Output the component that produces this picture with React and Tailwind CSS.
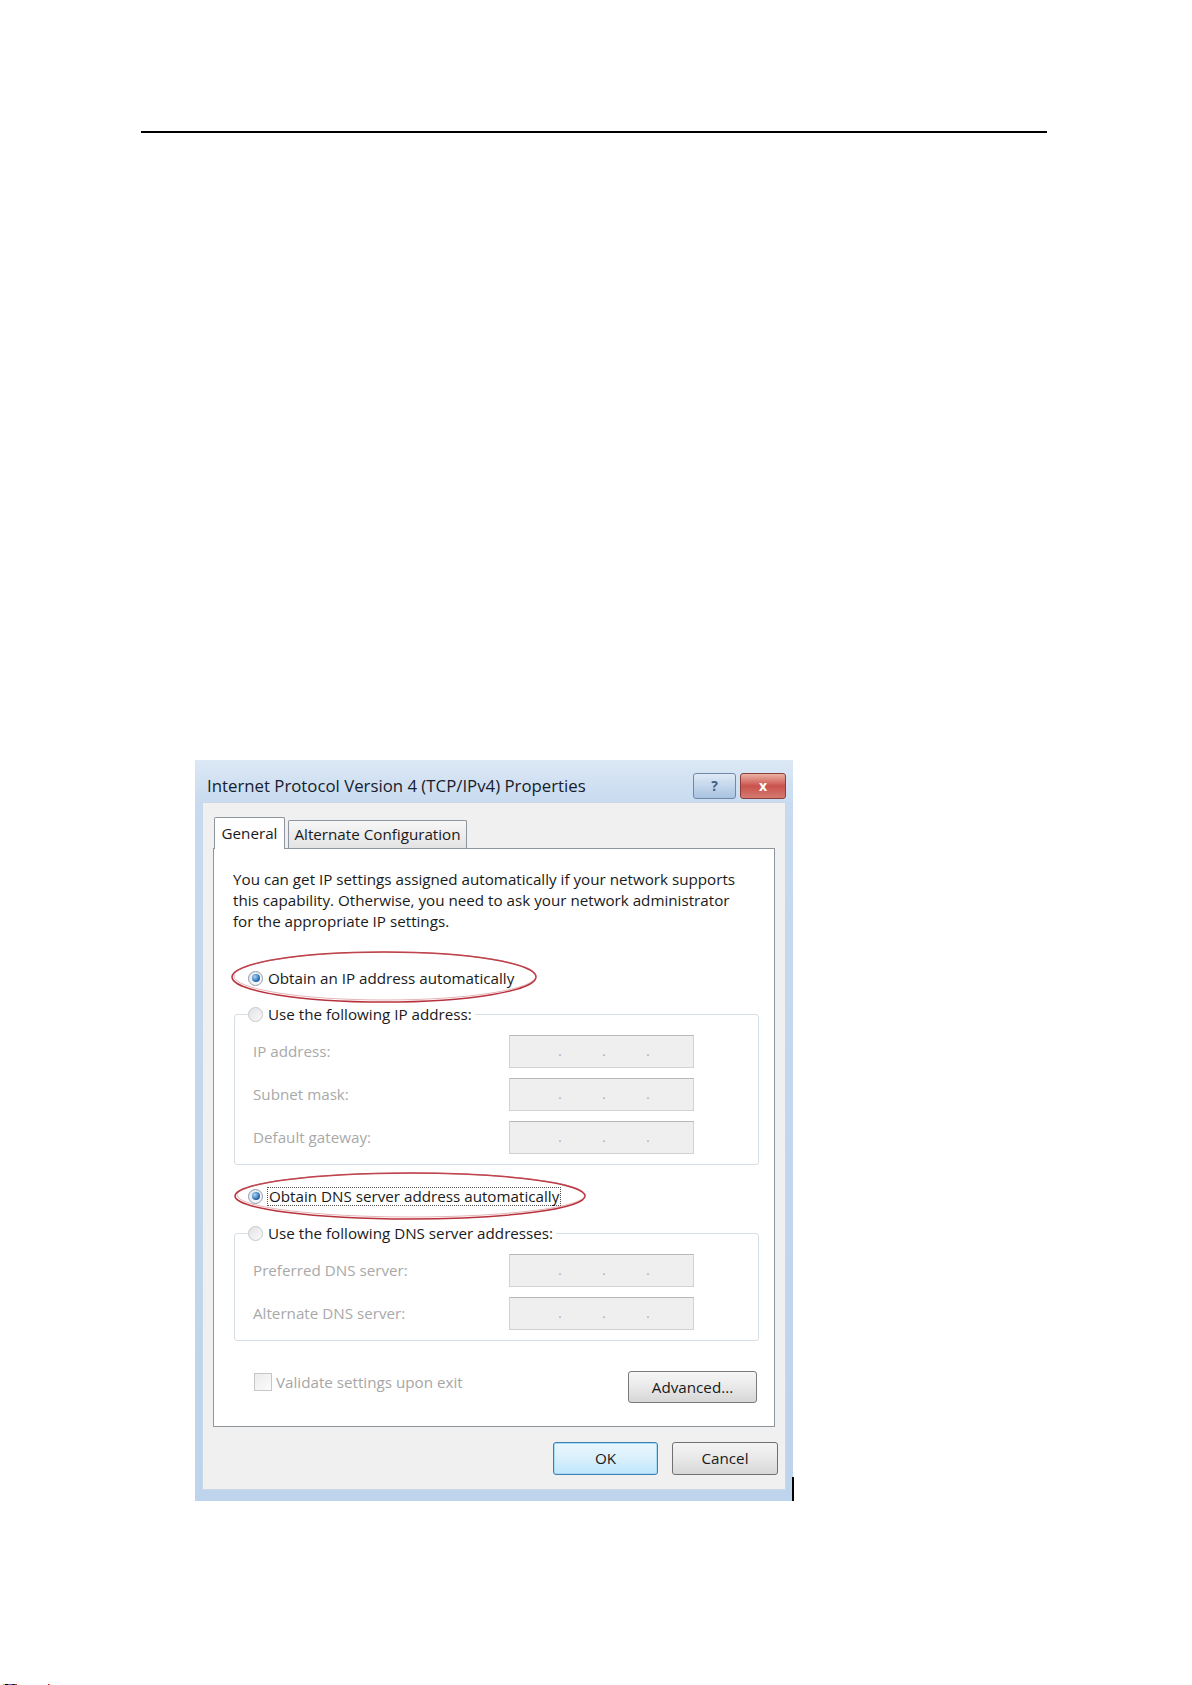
import React from "react";

function Radio({ checked }) {
  if (checked) {
    return (
      <span className="flex h-[15px] w-[15px] shrink-0 items-center justify-center rounded-full border border-[#8e9cab] bg-gradient-to-br from-[#dfe6ee] to-[#fbfcfd]">
        <span className="h-[8px] w-[8px] rounded-full bg-[radial-gradient(circle_at_35%_35%,#a8d6f7,#1f5fa8_70%)]" />
      </span>
    );
  }
  return (
    <span className="h-[15px] w-[15px] shrink-0 rounded-full border border-[#c3c8cd] bg-gradient-to-br from-[#e2e2e2] to-[#fafafa]" />
  );
}

// greyed-out IP entry box with its three dots
function IpBox() {
  return (
    <div className="flex h-[33px] w-[185px] items-end border border-[#d2d2d2] border-t-[#b8b8b8] bg-[#efefef] pb-[9px] pl-[28px] text-[#a8a8a8]">
      {[0, 1, 2].map((i) => (
        <span key={i} className="w-[44px] text-center text-[13px] leading-none">
          .
        </span>
      ))}
    </div>
  );
}

function IpRow({ label }) {
  return (
    <div className="flex items-center">
      <span className="w-[256px] text-[#a9a9a9]">{label}</span>
      <IpBox />
    </div>
  );
}

function GroupBox({ legend, rows, className }) {
  return (
    <div className={"rounded-[3px] border border-[#d7dee4] pb-[10px] pl-[18px] " + className}>
      <div className="-mt-[11px] ml-[-5px] flex h-[20px] w-fit items-center gap-[5px] bg-white pr-[3px]">
        <Radio />
        <span className="text-[#1a1a1a]">{legend}</span>
      </div>
      <div className="mt-[11px] flex flex-col gap-[10px]">
        {rows.map((r) => (
          <IpRow key={r} label={r} />
        ))}
      </div>
    </div>
  );
}

function Ring({ width, height, left, top }) {
  return (
    <svg
      className="pointer-events-none absolute"
      style={{ left, top }}
      width={width}
      height={height}
      viewBox={`0 0 ${width} ${height}`}
    >
      <ellipse
        cx={width / 2}
        cy={height / 2}
        rx={width / 2 - 2}
        ry={height / 2 - 2}
        fill="none"
        stroke="#b8323c"
        strokeWidth="1.5"
      />
      <ellipse
        cx={width / 2 + 1}
        cy={height / 2 - 1}
        rx={width / 2 - 3}
        ry={height / 2 - 3}
        fill="none"
        stroke="#c8606a"
        strokeWidth="0.8"
        opacity="0.6"
      />
    </svg>
  );
}

export default function App() {
  return (
    <div className="flex h-[1685px] w-[1192px] flex-col bg-white font-['Open_Sans',sans-serif] text-[15.2px] text-[#1a1a1a]">
      {/* rule at the top of the page */}
      <div className="ml-[141px] mt-[131px] h-[2px] w-[906px] bg-black" />

      {/* dialog */}
      <div className="relative ml-[195px] mt-[627px] flex h-[741px] w-[598px] flex-col bg-[linear-gradient(180deg,#dce8f5_0%,#c7daef_6%,#bdd4ec_100%)]">
        <div className="flex h-[42px] items-center pl-[12px] pr-[7px] pt-[10px]">
          <span className="text-[16.8px] text-[#16202c]">
            Internet Protocol Version 4 (TCP/IPv4) Properties
          </span>
          <div className="ml-auto flex gap-[4px]">
            <div className="flex h-[26px] w-[43px] items-center justify-center rounded-[3px] border border-[#7189a8] bg-gradient-to-b from-[#dfeaf6] via-[#c3d6eb] to-[#a9c3e0] text-[14px] font-bold leading-none text-[#3f5f86]">
              ?
            </div>
            <div className="flex h-[26px] w-[46px] items-center justify-center rounded-[3px] border border-[#8a3f3a] bg-gradient-to-b from-[#eab0a4] via-[#c9524d] to-[#d47a70] text-[14px] font-bold leading-none text-white">
              x
            </div>
          </div>
        </div>

        <div className="mx-[7px] mb-[11px] flex flex-1 flex-col border border-[#c9d8e8] bg-[#f0f0f0] pt-[14px]">
          {/* tabs */}
          <div className="relative z-10 -mb-[1px] flex items-end pl-[11px]">
            <div className="flex h-[32px] w-[71px] items-center justify-center rounded-t-[2px] border border-b-0 border-[#8f959c] bg-white">
              General
            </div>
            <div className="mb-[1px] ml-[3px] flex h-[28px] w-[179px] items-center justify-center rounded-t-[2px] border border-b-0 border-[#8f959c] bg-gradient-to-b from-[#f7f7f7] to-[#e3e3e3]">
              Alternate Configuration
            </div>
          </div>

          {/* tab panel */}
          <div className="mx-[10px] flex flex-col border border-[#8f959c] bg-white pb-[23px] pl-[20px] pr-[15px] pt-[20px]">
            <p className="-ml-[1px] whitespace-nowrap leading-[21px]">
              You can get IP settings assigned automatically if your network supports
              <br />
              this capability. Otherwise, you need to ask your network administrator
              <br />
              for the appropriate IP settings.
            </p>

            <div className="relative ml-[14px] mt-[36px] flex h-[20px] w-fit items-center gap-[5px]">
              <Radio checked />
              <span>Obtain an IP address automatically</span>
              <Ring width={308} height={54} left={-18} top={-18} />
            </div>

            <GroupBox
              className="mt-[26px]"
              legend="Use the following IP address:"
              rows={["IP address:", "Subnet mask:", "Default gateway:"]}
            />

            <div className="relative ml-[14px] mt-[21px] flex h-[20px] w-fit items-center gap-[4px]">
              <Radio checked />
              <span className="border border-dotted border-[#555] px-[1px] leading-[17px]">
                Obtain DNS server address automatically
              </span>
              <Ring width={354} height={50} left={-15} top={-15} />
            </div>

            <GroupBox
              className="mt-[27px]"
              legend="Use the following DNS server addresses:"
              rows={["Preferred DNS server:", "Alternate DNS server:"]}
            />

            <div className="mt-[30px] flex items-start justify-between">
              <div className="ml-[20px] flex items-center gap-[4px]">
                <span className="h-[18px] w-[18px] border border-[#c6c6c6] bg-gradient-to-br from-[#ececec] to-[#fbfbfb]" />
                <span className="text-[#a6a6a6]">Validate settings upon exit</span>
              </div>
              <div className="mr-[2px] flex h-[32px] w-[129px] items-center justify-center rounded-[3px] border border-[#7a7a7a] bg-gradient-to-b from-[#f6f6f6] via-[#e9e9e9] to-[#d6d6d6]">
                Advanced...
              </div>
            </div>
          </div>

          {/* dialog buttons */}
          <div className="mt-[15px] flex justify-end gap-[14px] pr-[7px]">
            <div className="flex h-[33px] w-[105px] items-center justify-center rounded-[3px] border border-[#3c7fb1] bg-gradient-to-b from-[#eaf6fd] via-[#d9f0fc] to-[#bee6fd] shadow-[inset_0_0_0_1px_#a8dcf5]">
              OK
            </div>
            <div className="flex h-[33px] w-[106px] items-center justify-center rounded-[3px] border border-[#707070] bg-gradient-to-b from-[#f4f4f4] via-[#e8e8e8] to-[#d7d7d7]">
              Cancel
            </div>
          </div>
        </div>

        <div className="absolute bottom-0 right-[-1px] h-[24px] w-[2px] bg-black" />
      </div>

      {/* stray pixels along the bottom edge */}
      <div className="mt-auto flex h-[1px]">
        <span className="ml-[3px] w-[2px] bg-[#c8c83c]" />
        <span className="w-[3px] bg-black" />
        <span className="w-[2px] bg-[#a040a0]" />
        <span className="w-[2px] bg-[#3070c0]" />
        <span className="w-[3px] bg-[#202020]" />
        <span className="w-[2px] bg-[#d03030]" />
        <span className="ml-[31px] w-[1px] bg-[#e02020]" />
        <span className="w-[1px] bg-[#20c0d0]" />
      </div>
    </div>
  );
}
